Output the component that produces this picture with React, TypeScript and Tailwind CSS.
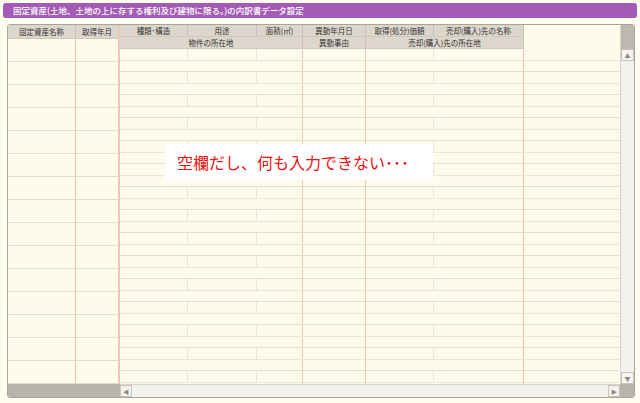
import React from "react";

const font = { fontFamily: '"Noto Sans CJK JP", "Noto Sans", sans-serif' };
const recs = Array.from({ length: 15 });

function RightRecord() {
  return (
    <div className="flex flex-col">
      <div className="flex h-[12px] border-b border-[#ece4d4]">
        <div className="w-[68px] border-r border-[#ece4d4]" />
        <div className="w-[69px] border-r border-[#ece4d4]" />
        <div className="w-[46px] border-r border-[#f0c4bc]" />
        <div className="w-[63px] border-r border-[#f0c4bc]" />
        <div className="w-[68px] border-r border-[#ece4d4]" />
        <div className="w-[90px] border-r border-[#f0c4bc]" />
      </div>
      <div className="flex h-[11px] border-b border-[#e4dccc]">
        <div className="w-[183px] border-r border-[#f0c4bc]" />
        <div className="w-[63px] border-r border-[#f0c4bc]" />
        <div className="w-[158px] border-r border-[#f0c4bc]" />
      </div>
    </div>
  );
}

export default function App() {
  return (
    <div className="w-[640px] h-[403px] bg-[#fffdf0] relative overflow-hidden" style={font}>
      <div className="mx-[3px] mt-[3px] h-[15px] bg-[#a35bb5] rounded-[3px] text-white text-[8.5px] leading-[15px] pl-[10px] font-medium whitespace-nowrap">
        固定資産(土地、土地の上に存する権利及び建物に限る。)の内訳書データ設定
      </div>
      <div className="absolute left-[7px] top-[24px] w-[628px] h-[374px] border border-[#a8a49c] rounded-[3px] bg-[#fffbea] flex flex-col overflow-hidden">
        <div className="flex flex-1 min-h-0">
          <div className="flex flex-col w-[112px] border-r-2 border-[#f0c4bc]">
            <div className="flex h-[24px] bg-[#ddd6cc] text-[7.5px] text-[#333] border-b border-[#cfc8bc] whitespace-nowrap">
              <div className="w-[68px] border-r border-[#c8c0b4] flex items-center justify-center">固定資産名称</div>
              <div className="flex-1 flex items-center justify-center">取得年月</div>
            </div>
            {recs.map((_, i) => (
              <div key={i} className="flex h-[23px] border-b border-[#e4dccc] shrink-0">
                <div className="w-[68px] border-r border-[#f0c4bc]" />
                <div className="flex-1" />
              </div>
            ))}
          </div>
          <div className="flex-1 flex flex-col overflow-hidden">
            <div className="flex flex-col w-[404px] bg-[#ddd6cc] text-[7.5px] text-[#333] h-[24px] border-b border-[#cfc8bc] whitespace-nowrap">
              <div className="flex h-[12px] border-b border-[#cfc8bc]">
                <div className="w-[68px] border-r border-[#c8c0b4] text-center leading-[12px]">種類･構造</div>
                <div className="w-[69px] border-r border-[#c8c0b4] text-center leading-[12px]">用途</div>
                <div className="w-[46px] border-r border-[#c8c0b4] text-center leading-[12px]">面積(㎡)</div>
                <div className="w-[63px] border-r border-[#c8c0b4] text-center leading-[12px]">異動年月日</div>
                <div className="w-[68px] border-r border-[#c8c0b4] text-center leading-[12px]">取得(処分)価額</div>
                <div className="w-[90px] border-r border-[#c8c0b4] text-center leading-[12px]">売却(購入)先の名称</div>
              </div>
              <div className="flex h-[11px]">
                <div className="w-[183px] border-r border-[#c8c0b4] text-center leading-[11px]">物件の所在地</div>
                <div className="w-[63px] border-r border-[#c8c0b4] text-center leading-[11px]">異動事由</div>
                <div className="w-[158px] border-r border-[#c8c0b4] text-center leading-[11px]">売却(購入)先の所在地</div>
              </div>
            </div>
            {recs.map((_, i) => (
              <RightRecord key={i} />
            ))}
          </div>
          <div className="w-[14px] flex flex-col bg-[#f2f1ec] border-l border-[#d8d4cc]">
            <div className="h-[24px] bg-[#bcb8b0]" />
            <div className="h-[12px] border border-[#c8c4bc] bg-[#f4f3ee] text-[6px] text-[#888] flex items-center justify-center">▲</div>
            <div className="flex-1" />
            <div className="h-[12px] border border-[#c8c4bc] bg-[#f4f3ee] text-[6px] text-[#888] flex items-center justify-center">▼</div>
          </div>
        </div>
        <div className="flex h-[13px] shrink-0">
          <div className="w-[112px] bg-[#b8b4ac]" />
          <div className="flex-1 flex bg-[#f2f1ec] border-t border-[#d8d4cc]">
            <div className="w-[12px] border border-[#c8c4bc] text-[6px] text-[#888] flex items-center justify-center">◀</div>
            <div className="flex-1" />
            <div className="w-[12px] border border-[#c8c4bc] text-[6px] text-[#888] flex items-center justify-center">▶</div>
          </div>
          <div className="w-[14px] bg-[#b8b4ac]" />
        </div>
      </div>
      <div className="absolute left-[165px] top-[144px] w-[268px] h-[36px] bg-white flex items-center pl-[12px] text-[#f01010] text-[16px] whitespace-nowrap">
        空欄だし、何も入力できない･･･
      </div>
    </div>
  );
}
